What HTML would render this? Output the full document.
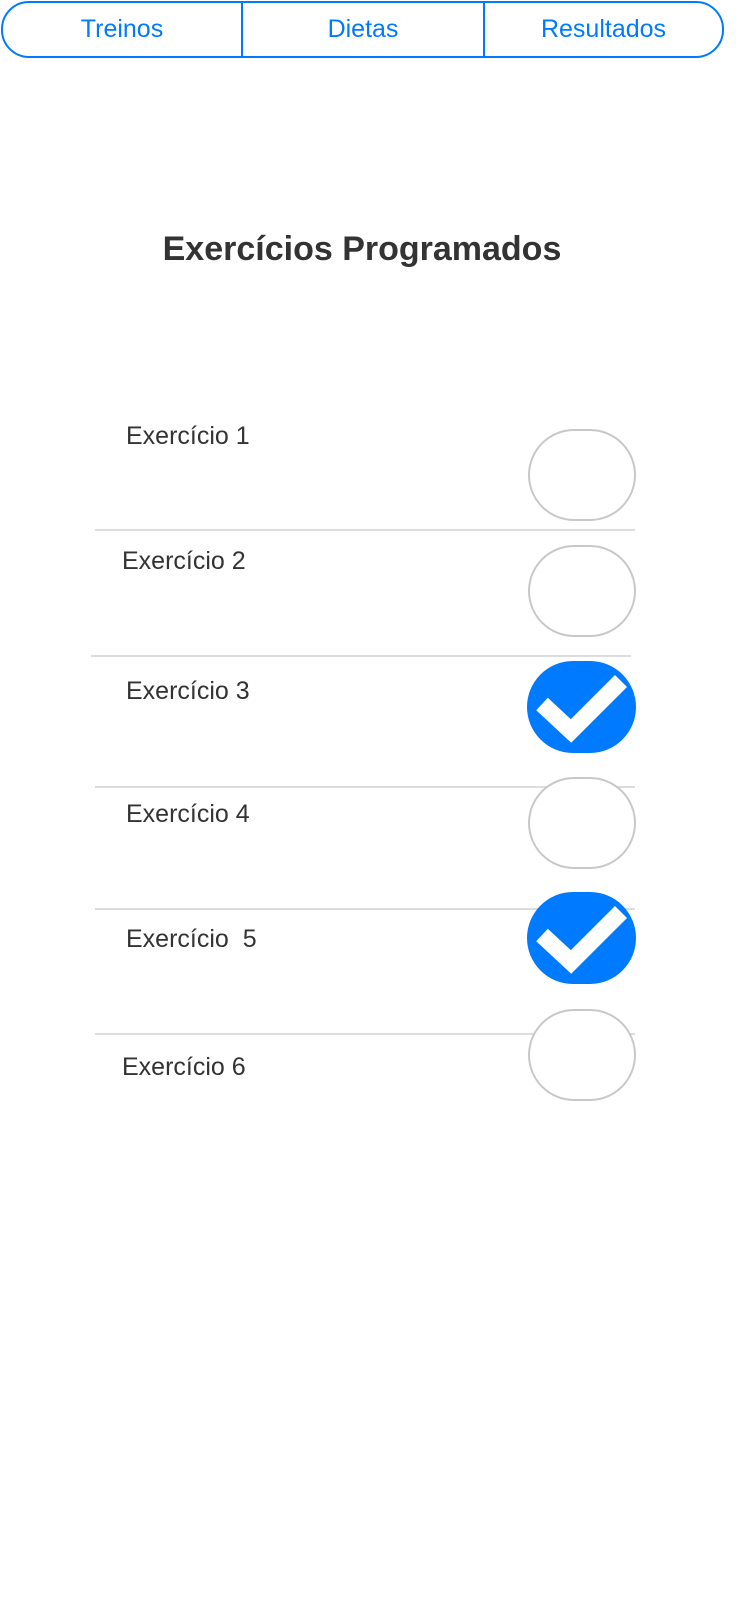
<!DOCTYPE html>
<html><head><meta charset="utf-8"><style>
body{margin:0;width:756px;height:1624px;background:#fff;position:relative;font-family:"Liberation Sans",Arial,sans-serif;overflow:hidden}
.tabs{position:absolute;left:1px;top:1px;width:719px;height:53px;border:2px solid #007aff;border-radius:28px;display:flex;color:#007aff;font-size:25px}
.tabs div{flex:none;display:flex;align-items:center;justify-content:center}
.t1{width:238px;border-right:2px solid #007aff}
.t2{width:240px;border-right:2px solid #007aff}
.t3{flex:1!important}
h1{position:absolute;top:230px;left:0;width:724px;text-align:center;margin:0;font-size:34px;color:#333;font-weight:bold}
.lbl{position:absolute;font-size:25px;color:#333}
.line{position:absolute;height:2px;background:#ddd;width:540px}
.c{position:absolute;left:528px;width:104px;height:88px;border:2px solid #c8c8c8;border-radius:46px;background:#fff}
.k{position:absolute;left:527px;width:109px;height:92px;border-radius:46px;background:#007aff}
</style></head><body>
<div class="tabs"><div class="t1">Treinos</div><div class="t2">Dietas</div><div class="t3">Resultados</div></div>
<h1>Exercícios Programados</h1>
<div class="lbl" style="left:126px;top:422px">Exercício 1</div>
<div class="c" style="top:429px"></div>
<div class="line" style="left:95px;top:529px"></div>
<div class="lbl" style="left:122px;top:547px">Exercício 2</div>
<div class="c" style="top:545px"></div>
<div class="line" style="left:91px;top:655px"></div>
<div class="lbl" style="left:126px;top:677px">Exercício 3</div>
<div class="k" style="top:661px"><svg width="109" height="92"><polyline points="15,43 44,70 94,20" fill="none" stroke="#fff" stroke-width="17"/></svg></div>
<div class="line" style="left:95px;top:786px"></div>
<div class="lbl" style="left:126px;top:800px">Exercício 4</div>
<div class="c" style="top:777px"></div>
<div class="line" style="left:95px;top:908px"></div>
<div class="lbl" style="left:126px;top:925px">Exercício&nbsp; 5</div>
<div class="k" style="top:892px"><svg width="109" height="92"><polyline points="15,43 44,70 94,20" fill="none" stroke="#fff" stroke-width="17"/></svg></div>
<div class="line" style="left:95px;top:1033px"></div>
<div class="c" style="top:1009px"></div>
<div class="lbl" style="left:122px;top:1053px">Exercício 6</div>
</body></html>
